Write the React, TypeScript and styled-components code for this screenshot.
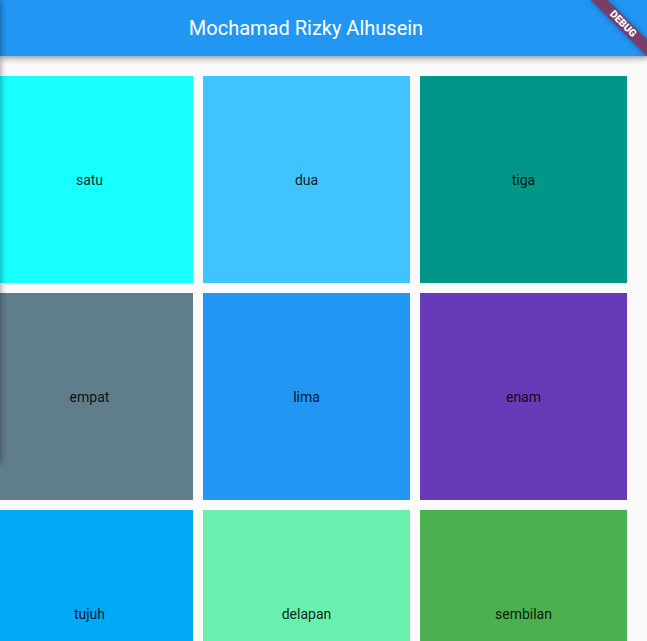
import React from "react";
import styled, { createGlobalStyle } from "styled-components";

const Global = createGlobalStyle`
  html, body { margin: 0; padding: 0; }
  body {
    background: #fafafa;
    font-family: Roboto, "Noto Sans", sans-serif;
    overflow: hidden;
    width: 647px;
    height: 641px;
  }
`;

const Screen = styled.div`
  position: relative;
  width: 647px;
  height: 641px;
  overflow: hidden;
  background: #fafafa;
`;

const AppBar = styled.header`
  position: relative;
  z-index: 2;
  height: 56px;
  background: #2196f3;
  box-shadow: 0 2px 4px -1px rgba(0, 0, 0, 0.2), 0 4px 5px 0 rgba(0, 0, 0, 0.14),
    0 1px 10px 0 rgba(0, 0, 0, 0.12);
  display: flex;
  align-items: center;
  justify-content: center;
  padding-right: 35px;
`;

const Title = styled.h1`
  margin: 0;
  color: #fff;
  font-family: Roboto, sans-serif;
  font-size: 20px;
  font-weight: 400;
`;

const Grid = styled.main`
  display: grid;
  grid-template-columns: repeat(3, 207px);
  grid-auto-rows: 207px;
  gap: 10px;
  padding-top: 20px;
  margin-left: -14px;
`;

const Tile = styled.div<{ $bg: string }>`
  background: ${(p) => p.$bg};
  display: flex;
  align-items: center;
  justify-content: center;
  color: rgba(0, 0, 0, 0.87);
  font-family: Roboto, sans-serif;
  font-size: 14px;
`;

const EdgeShadow = styled.div`
  position: absolute;
  z-index: 3;
  left: -20px;
  top: 0;
  width: 20px;
  height: 462px;
  background: #fafafa;
  box-shadow: 0 0 6px 1px rgba(0, 0, 0, 0.35);
`;

const Banner = styled.div`
  position: absolute;
  z-index: 4;
  left: 583px;
  top: 18px;
  width: 80px;
  height: 12px;
  transform: rotate(45deg);
  background: rgba(160, 20, 40, 0.68);
  box-shadow: 0 0 6px rgba(0, 0, 0, 0.3);
  color: #fff;
  font-family: Roboto, sans-serif;
  font-size: 10.2px;
  font-weight: 900;
  line-height: 12px;
  text-align: center;
`;

const tiles = [
  { label: "satu", bg: "#18ffff" },
  { label: "dua", bg: "#40c4ff" },
  { label: "tiga", bg: "#009688" },
  { label: "empat", bg: "#607d8b" },
  { label: "lima", bg: "#2196f3" },
  { label: "enam", bg: "#673ab7" },
  { label: "tujuh", bg: "#03a9f4" },
  { label: "delapan", bg: "#69f0ae" },
  { label: "sembilan", bg: "#4caf50" },
];

export default function App() {
  return (
    <Screen>
      <Global />
      <AppBar>
        <Title>Mochamad Rizky Alhusein</Title>
      </AppBar>
      <Grid>
        {tiles.map((t) => (
          <Tile key={t.label} $bg={t.bg}>
            {t.label}
          </Tile>
        ))}
      </Grid>
      <EdgeShadow />
      <Banner>DEBUG</Banner>
    </Screen>
  );
}
